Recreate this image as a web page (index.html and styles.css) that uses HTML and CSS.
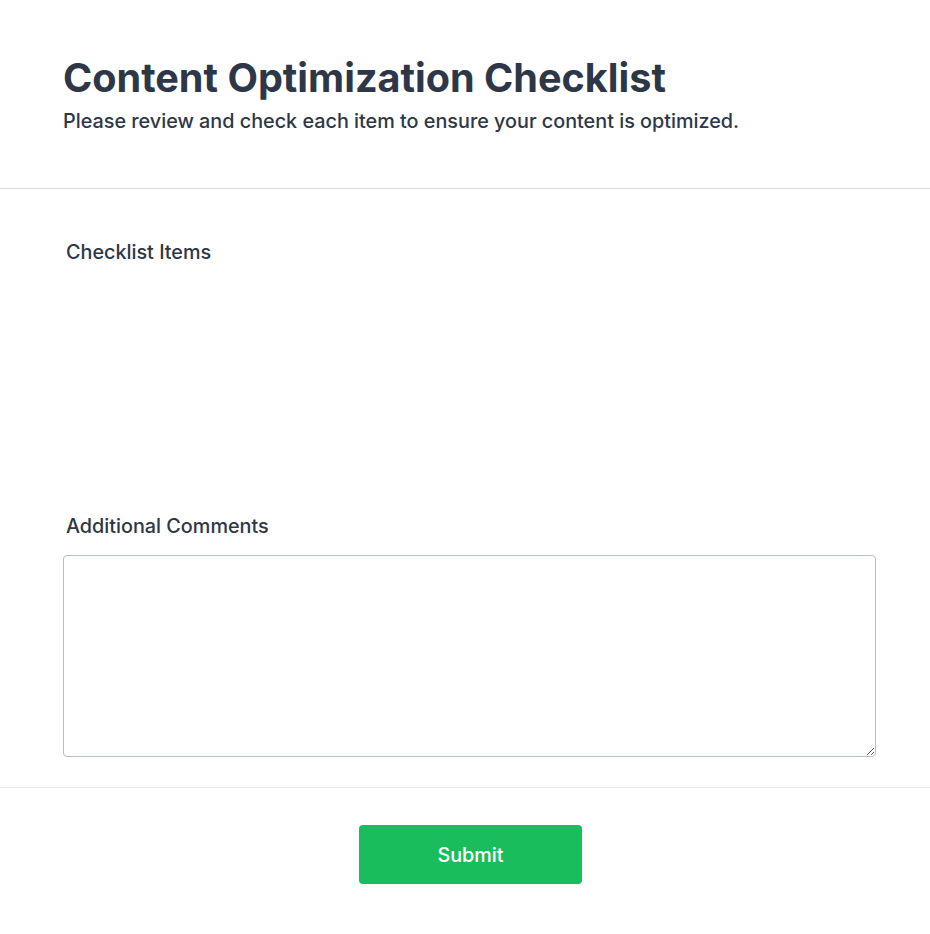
FILE: index.html
```html
<!DOCTYPE html>
<html lang="en">
<head>
  <meta charset="UTF-8">
  <title>Content Optimization Checklist</title>
  <link rel="stylesheet" href="styles.css">
</head>
<body>

  <header class="page-header">
    <h1>Content Optimization Checklist</h1>
    <p class="subtitle">Please review and check each item to ensure your content is optimized.</p>
  </header>

  <form id="checklistForm">
    <section class="form-body">
      <div class="checklist">
        <h2 class="field-label">Checklist Items</h2>
        <ul id="checklistItems"></ul>
      </div>

      <label for="comments" class="field-label">Additional Comments</label>
      <textarea id="comments" rows="8"></textarea>
    </section>

    <div class="form-footer">
      <button type="submit">Submit</button>
    </div>
  </form>

</body>
</html>
```

FILE: styles.css
```css
body {
  margin: 0;
  font-family: Inter, "Noto Sans", sans-serif;
  color: #2d3748;
  background-color: #fff;
}

.page-header {
  padding: 56px 63px 51px;
  border-bottom: 1px solid #d6d9e0;
}

.page-header h1 {
  margin: 0;
  font-size: 39.6px;
  line-height: 44px;
  font-weight: 700;
}

.subtitle {
  margin: 6px 0 0;
  font-size: 19.8px;
  line-height: 30.8px;
  font-weight: 500;
}

.form-body {
  padding: 48px 54px 30px 63px;
  border-bottom: 1px solid #e6e8ec;
}

.field-label {
  display: block;
  margin: 0;
  padding-left: 3px;
  font-size: 19.8px;
  line-height: 30.8px;
  font-weight: 500;
}

#checklistItems {
  list-style: none;
  margin: 0;
  padding: 0;
  min-height: 243px;
}

textarea {
  display: block;
  width: 100%;
  height: 202px;
  margin-top: 14px;
  box-sizing: border-box;
  padding: 10px;
  border: 1px solid #b8bdca;
  border-radius: 4px;
  font-family: inherit;
  font-size: 16px;
  resize: vertical;
}

.form-footer {
  display: flex;
  justify-content: center;
  padding: 37px 52px 50px 63px;
}

button {
  width: 223px;
  height: 59px;
  background-color: #1abd5c;
  color: #fff;
  border: none;
  border-radius: 4px;
  font-family: inherit;
  font-size: 19.8px;
  font-weight: 500;
  cursor: pointer;
}

button:hover {
  background-color: #16a34a;
}
```
